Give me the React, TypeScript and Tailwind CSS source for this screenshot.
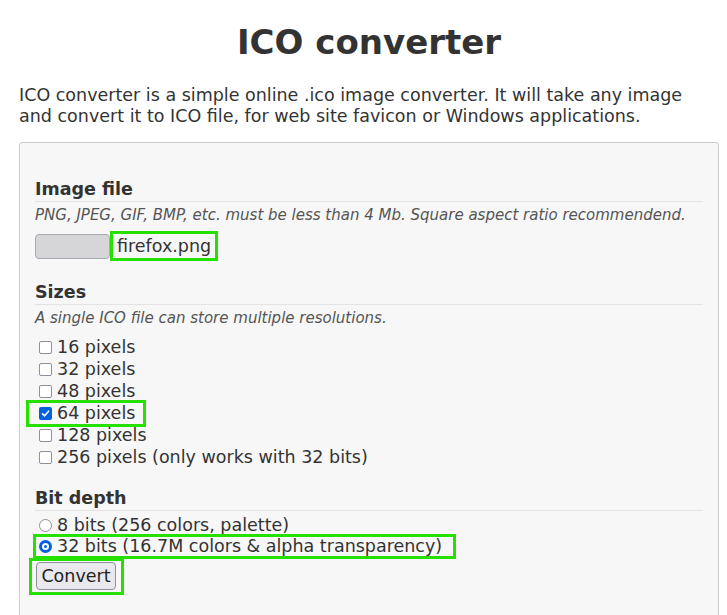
import React from "react";

const sizes = [
  { label: "16 pixels", checked: false },
  { label: "32 pixels", checked: false },
  { label: "48 pixels", checked: false },
  { label: "64 pixels", checked: true },
  { label: "128 pixels", checked: false },
  { label: "256 pixels (only works with 32 bits)", checked: false },
];

function Checkbox({ checked }: { checked: boolean }) {
  if (checked) {
    return (
      <span className="inline-flex w-[13px] h-[13px] rounded-[2px] bg-[#0060df] items-center justify-center mr-[5px] shrink-0">
        <svg width="9" height="9" viewBox="0 0 9 9" fill="none">
          <path d="M1.5 4.8 L3.6 6.8 L7.6 2.2" stroke="white" strokeWidth="1.6" strokeLinecap="round" strokeLinejoin="round" />
        </svg>
      </span>
    );
  }
  return <span className="inline-block w-[13px] h-[13px] rounded-[2px] border-[1.5px] border-[#8f8f9d] bg-white mr-[5px] shrink-0" />;
}

function Radio({ checked }: { checked: boolean }) {
  if (checked) {
    return (
      <span className="inline-flex w-[13px] h-[13px] rounded-full border-[3px] border-[#0060df] bg-white mr-[5px] shrink-0 items-center justify-center">
        <span className="w-[3px] h-[3px] rounded-full bg-[#0060df]" />
      </span>
    );
  }
  return <span className="inline-block w-[13px] h-[13px] rounded-full border-[1.5px] border-[#8f8f9d] bg-white mr-[5px] shrink-0" />;
}

function SectionTitle({ children }: { children: React.ReactNode }) {
  return (
    <div className="text-[17.5px] font-bold leading-[20px] pb-[2px] border-b border-[#e3e3e3] text-[#333]">
      {children}
    </div>
  );
}

function Hint({ children }: { children: React.ReactNode }) {
  return <div className="text-[15px] italic leading-[20px] mt-[3px] text-[#555]">{children}</div>;
}

export default function App() {
  return (
    <div className="min-h-screen bg-white pl-[19px] pr-[8px] text-[#333] font-['DejaVu_Sans',Verdana,sans-serif]">
      <h1 className="text-center text-[34px] font-bold leading-[40px] pt-[22px]">ICO converter</h1>
      <p className="mt-[23px] text-[17.5px] leading-[21px]">
        ICO converter is a simple online .ico image converter. It will take any image and convert it to ICO file, for web site favicon or Windows applications.
      </p>

      <form className="mt-[15px] border border-[#cccccc] rounded-[3px] bg-[#f7f7f7] px-[15px] pt-[36px] pb-[30px]">
        {/* Image file */}
        <SectionTitle>Image file</SectionTitle>
        <Hint>PNG, JPEG, GIF, BMP, etc. must be less than 4 Mb. Square aspect ratio recommendend.</Hint>
        <div className="flex items-center mt-[6px] h-[30px]">
          <span className="w-[75px] h-[25px] rounded-[4px] border border-[#a9a9b3] bg-[#d6d6d9]" />
          <span className="border-[3px] border-[#26e000] w-[108px] h-[30px] flex items-center px-[4px] text-[17.5px]">firefox.png</span>
        </div>

        {/* Sizes */}
        <div className="mt-[21px]">
          <SectionTitle>Sizes</SectionTitle>
          <Hint>A single ICO file can store multiple resolutions.</Hint>
          <div className="mt-[8px] flex flex-col">
            {sizes.map((s) => (
              <label
                key={s.label}
                className={
                  s.checked
                    ? "flex items-center h-[27px] text-[17.5px] -ml-[9px] pl-[10px] w-[120px] border-[3px] border-[#26e000] -mt-[2px] -mb-[3px]"
                    : "flex items-center h-[22px] text-[17.5px] pl-[4px]"
                }
              >
                <Checkbox checked={s.checked} />
                {s.label}
              </label>
            ))}
          </div>
        </div>

        {/* Bit depth */}
        <div className="mt-[20px]">
          <SectionTitle>Bit depth</SectionTitle>
          <div className="mt-[3px] flex flex-col">
            <label className="flex items-center h-[22px] text-[17.5px] pl-[4px]">
              <Radio checked={false} />8 bits (256 colors, palette)
            </label>
            <label className="flex items-center h-[25px] text-[17.5px] -ml-[2px] -mt-[2px] pl-[3px] w-[423px] border-[3px] border-[#26e000]">
              <Radio checked={true} />32 bits (16.7M colors &amp; alpha transparency)
            </label>
          </div>
          <div className="inline-flex -ml-[6px] mt-[-1px] border-[3px] border-[#26e000] pl-[4px] pr-[5px] pt-[1px] pb-[2px]">
            <button
              type="button"
              className="h-[28px] w-[80px] rounded-[4px] border border-[#8f8f9d] bg-[#e9e9ed] text-[17.5px] text-[#222]"
            >
              Convert
            </button>
          </div>
        </div>
      </form>
    </div>
  );
}
